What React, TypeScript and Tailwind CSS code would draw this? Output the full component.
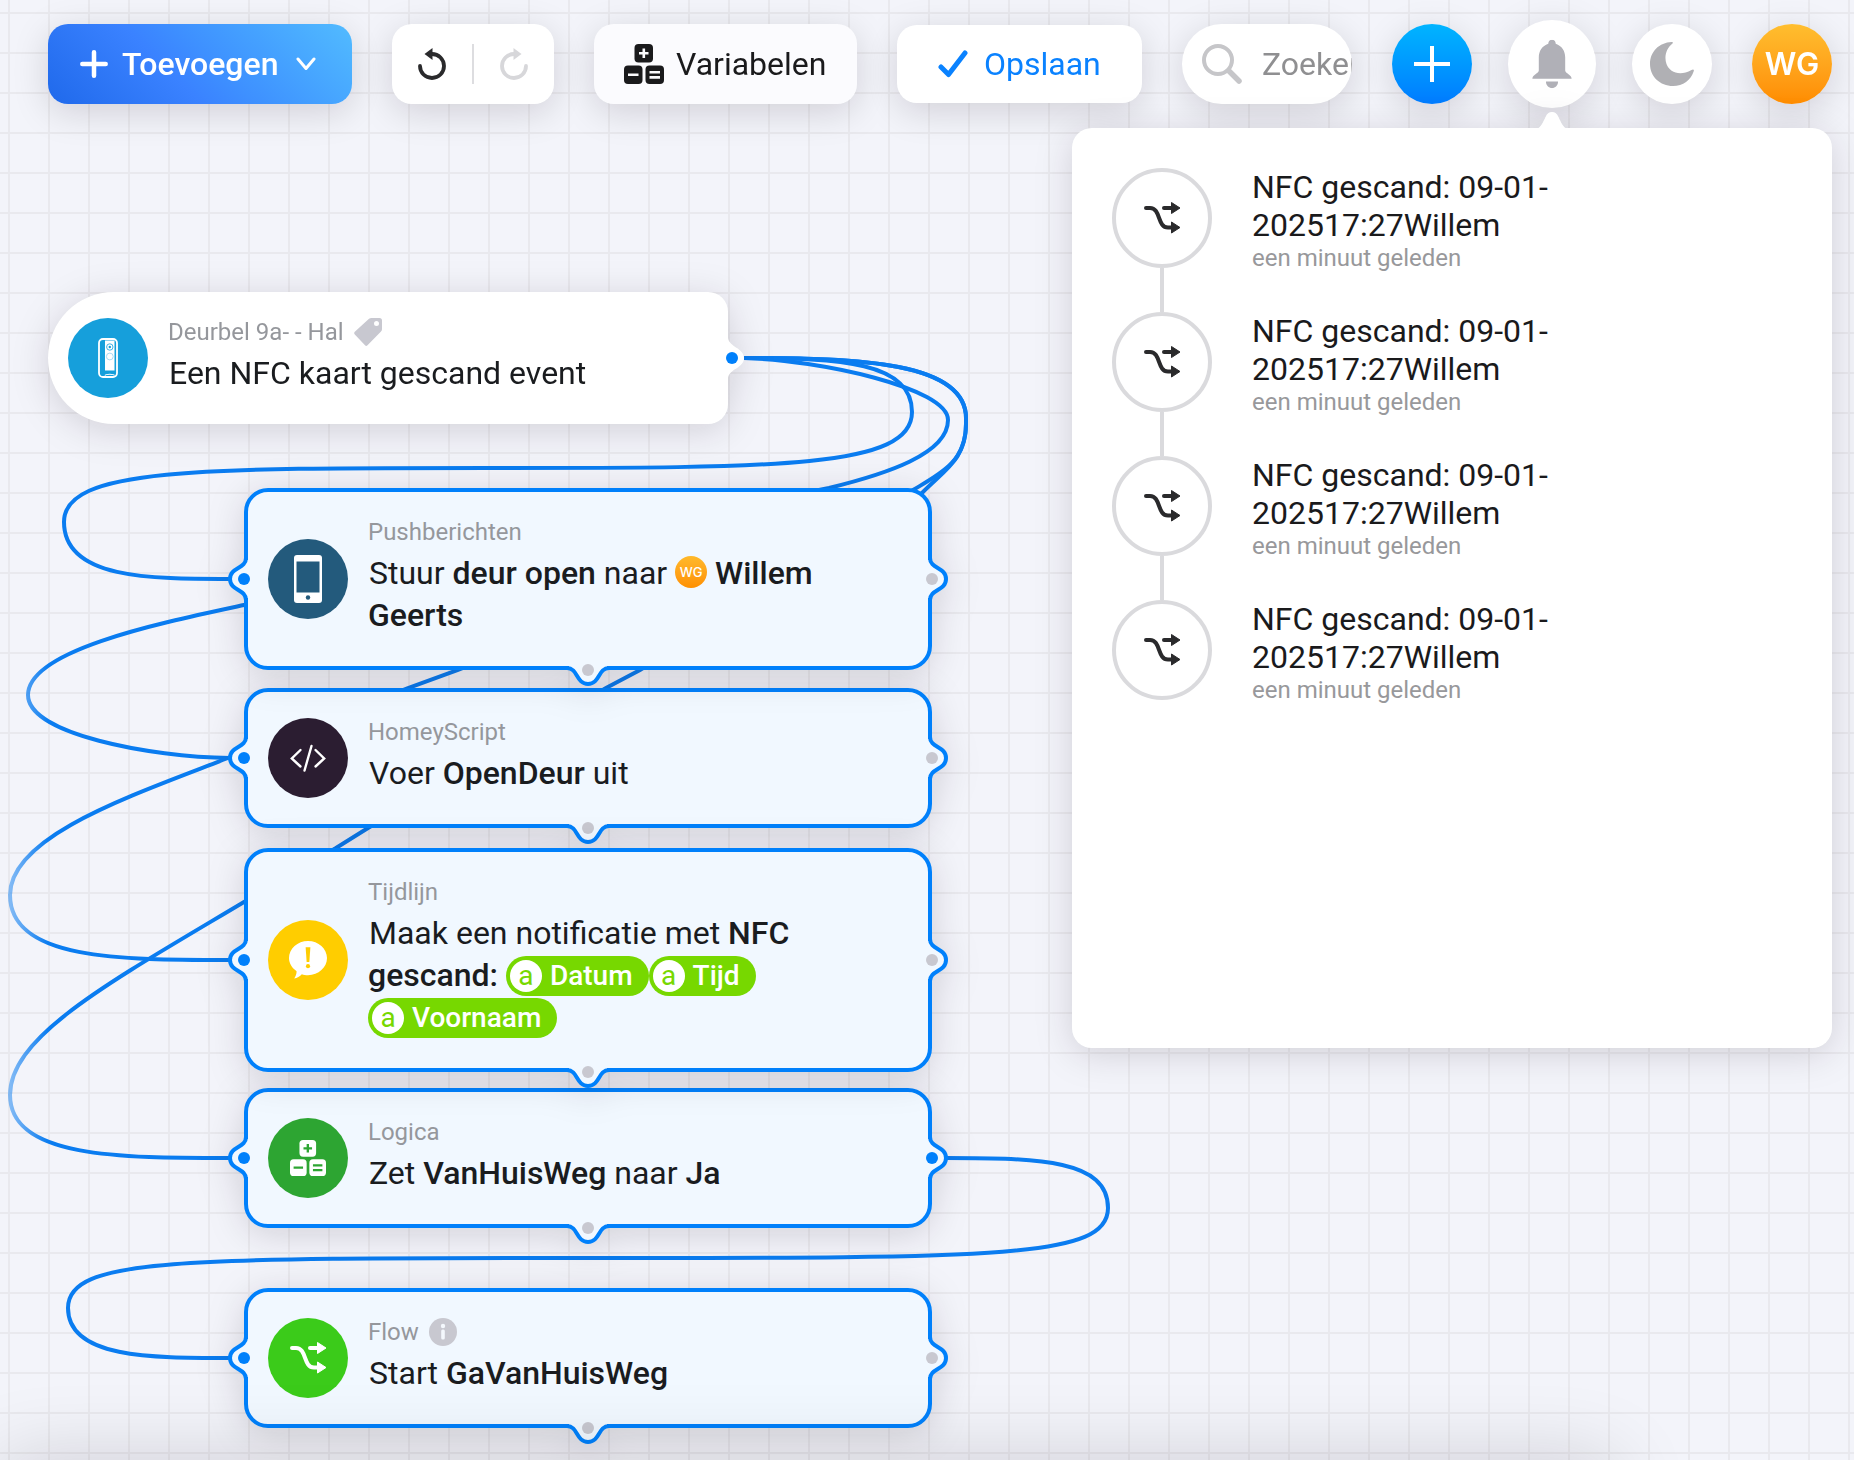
import { useState } from "react";
import type { ReactNode } from "react";

const notifications = [1, 2, 3, 4];

function ShuffleIcon() {
  return (
    <svg width="36" height="32" viewBox="0 0 36 32" fill="none" aria-hidden="true">
      <path d="M2 6H6C17 6 13 25.5 24 25.5H29" stroke="currentColor" strokeWidth="4" strokeLinecap="round" />
      <path d="M20 6H28" stroke="currentColor" strokeWidth="4" strokeLinecap="round" />
      <path d="M27.500 0.500 36 6 27.500 11.500ZM27.500 20 36 25.500 27.500 31Z" fill="currentColor" stroke="currentColor" strokeWidth="1" strokeLinejoin="round" />
    </svg>
  );
}

function LogicIcon({ size, hole }: { size: number; hole: string }) {
  return (
    <svg width={size} height={size} viewBox="0 0 40 40" aria-hidden="true">
      <g fill="currentColor">
        <rect x="10.500" y="0" width="18.500" height="18.500" rx="4" />
        <rect x="0" y="21.500" width="18.500" height="18.500" rx="4" />
        <rect x="21.500" y="21.500" width="18.500" height="18.500" rx="4" />
      </g>
      <path d="M15 9.300H24.500M19.800 4.500V14M4 30.700H14.500M25.500 28.200H36M25.500 33.400H36" stroke={hole} strokeWidth="2.600" />
    </svg>
  );
}

function PhoneIcon() {
  return (
    <svg width="28" height="48" viewBox="0 0 28 48" aria-hidden="true">
      <rect width="28" height="48" rx="3" fill="#fff" />
      <rect x="2.500" y="6.500" width="23" height="31" fill="#235a7c" />
      <circle cx="14" cy="42.500" r="2.200" fill="#235a7c" />
    </svg>
  );
}

function DoorbellIcon() {
  return (
    <svg width="20" height="40" viewBox="0 0 20 40" fill="none" aria-hidden="true">
      <rect x="1" y="1" width="18" height="38" rx="4" stroke="#fff" strokeWidth="1.800" />
      <rect x="7" y="2.500" width="9.500" height="30" fill="#fff" />
      <circle cx="11.800" cy="9" r="3.200" stroke="#169fdb" strokeWidth="0.800" />
      <circle cx="11.800" cy="9" r="1.200" fill="#169fdb" />
      <circle cx="11.800" cy="18.500" r="3.400" stroke="#9fd6f0" strokeWidth="0.900" />
      <path d="M7 37.500C7.500 35.800 16 35.800 16.500 37.500" stroke="#fff" strokeWidth="1.200" />
    </svg>
  );
}

function CodeIcon() {
  return (
    <svg width="36" height="28" viewBox="0 0 36 28" fill="none" stroke="#fff" strokeWidth="2.400" strokeLinecap="round" aria-hidden="true">
      <path d="M10.500 6 1.800 14.500 10.500 22.500M25.500 6 34.200 14.500 25.500 22.500M21.500 2 14.500 26.500" />
    </svg>
  );
}

function NoticeIcon() {
  return (
    <svg width="38" height="38" viewBox="0 0 40 40" aria-hidden="true">
      <path d="M20 0C31 0 40 8 40 18S31 36 20 36C17.500 36 15.500 35.600 13.500 35 11.500 37.500 8.500 39 5.500 39.500 7 37 8 34.500 8 31.800 3 28.500 0 23.500 0 18 0 8 9 0 20 0Z" fill="#fff" />
      <path d="M17.500 6.500H22.500L21.400 22H18.600Z" fill="#ffcd00" />
      <circle cx="20" cy="26.500" r="2.200" fill="#ffcd00" />
    </svg>
  );
}

function TagIcon() {
  return (
    <svg width="28" height="28" viewBox="0 0 28 28" aria-hidden="true">
      <path fillRule="evenodd" d="M15 0.800Q16 0 17.500 0H25.500Q28 0 28 2.500V11Q28 12.500 27 13.500L13.500 27.300Q12.200 28.500 11 27.300L0.800 16.500Q-0.500 15 0.800 13.700ZM22.500 3A2.500 2.500 0 1 0 22.500 8 2.500 2.500 0 1 0 22.500 3Z" fill="#c8c8d0" />
    </svg>
  );
}

function InfoIcon() {
  return (
    <svg width="28" height="28" viewBox="0 0 28 28" aria-hidden="true">
      <circle cx="14" cy="14" r="14" fill="#c8c8d0" />
      <circle cx="14" cy="8" r="2.200" fill="#f4f8fd" />
      <rect x="12.200" y="11.500" width="3.600" height="10" rx="1.500" fill="#f4f8fd" />
    </svg>
  );
}

// Connection point, 0,0 is the middle of the card's inner edge
function Port({ side, active, plain }: { side: "left" | "right" | "bottom"; active?: boolean; plain?: boolean }) {
  const place = {
    left: "left-0 top-1/2 -translate-x-1/2 -translate-y-1/2",
    right: "right-0 top-1/2 translate-x-1/2 -translate-y-1/2",
    bottom: "bottom-0 left-1/2 -translate-x-1/2 translate-y-1/2",
  };
  const turn = { left: "rotate(180)", right: "", bottom: "rotate(90)" };

  return (
    <svg className={`absolute ${place[side]}`} width="48" height="48" viewBox="-24 -24 48 48" fill="none" aria-hidden="true">
      <g transform={turn[side]}>
        {plain ? (
          <path d="M-2 -20H0C1 -11 16 -10 16 0C16 10 1 11 0 20H-2Z" fill="#fff" />
        ) : (
          <>
            <path d="M-1 -19H2C3 -10 18 -11 18 0C18 11 3 10 2 19H-1Z" fill="#f1f8ff" />
            <path d="M2 -21C2 -10 18 -12 18 0C18 12 2 10 2 21" stroke="#0080fb" strokeWidth="4" />
          </>
        )}
        <circle cx="4" cy="0" r="6" fill={active ? "#0080fb" : "#c8c8d0"} />
      </g>
    </svg>
  );
}

function Token({ children }: { children: ReactNode }) {
  return (
    <span className="inline-flex h-10 items-center gap-2 rounded-full bg-[#77d800] pr-4 pl-1 indent-0 align-bottom text-[28px] leading-10 font-medium text-white">
      <span className="flex size-8 items-center justify-center rounded-full bg-white leading-7 font-normal text-[#77d800]">a</span>
      {children}
    </span>
  );
}

type CardProps = {
  place: string;
  color: string;
  icon: ReactNode;
  app: string;
  badge?: ReactNode;
  out?: boolean;
  children: ReactNode;
};

function CardBody({ color, icon, app, badge, children }: Omit<CardProps, "place" | "out">) {
  return (
    <>
      <span className={`flex size-20 shrink-0 items-center justify-center rounded-full text-white ${color}`}>{icon}</span>
      <div className="min-w-0 pb-[6px]">
        <p className="mb-1 flex h-8 items-center gap-[10px] text-2xl leading-8 text-[#95979c]">
          {app}
          {badge}
        </p>
        <h2 className="indent-px text-[32px] leading-[42px] text-[#1a1c1f]">{children}</h2>
      </div>
    </>
  );
}

function ActionCard({ place, out, ...body }: CardProps) {
  return (
    <article
      className={`absolute flex w-[688px] items-center gap-5 rounded-3xl border-4 border-[#0080fb] bg-[#f1f8ff] py-6 pr-10 pl-5 drop-shadow-[0_6px_18px_rgba(20,10,20,0.15)] ${place}`}
    >
      <CardBody {...body} />
      <Port side="left" active />
      <Port side="right" active={out} />
      <Port side="bottom" />
    </article>
  );
}

const wires = [
  "M744 358C840 358 912 362 912 412C912 468 780 468 488 468C196 468 64 468 64 522C64 579 150 579 230 579",
  "M744 358C820 360 948 388 948 420C948 454 886 474 829 488L244 605C160 623 28 650 28 695C28 734 150 757 230 758",
  "M744 358C860 358 966 362 966 418V424C966 462 940 474 913 490L458 670L408 688L228 758C130 796 10 836 10 895C10 960 120 960 230 960",
  "M744 358C860 358 966 362 966 418V424C966 460 944 470 921 494L640 670L606 688L368 828L336 848L244 902C110 982 10 1036 10 1095C10 1158 120 1158 230 1158",
  "M946 1158C1040 1158 1108 1160 1108 1208C1108 1258 1000 1258 588 1258C176 1258 68 1258 68 1308C68 1358 150 1358 230 1358",
];

function Canvas() {
  return (
    <main className="relative col-start-1 row-start-1 h-[1460px] min-h-screen overflow-hidden bg-[#f3f4fa] bg-[linear-gradient(to_right,#e9e9ee_2px,transparent_2px),linear-gradient(to_bottom,#e9e9ee_2px,transparent_2px)] bg-size-[40px_40px] bg-position-[8px_12px]">
      <svg className="absolute inset-0 size-full" fill="none" aria-hidden="true">
        <defs>
          <linearGradient id="wire" gradientUnits="userSpaceOnUse" x1="0" y1="0" x2="48" y2="0">
            <stop offset="0" stopColor="#0a7cf0" stopOpacity="0.35" />
            <stop offset="1" stopColor="#0a7cf0" />
          </linearGradient>
        </defs>
        {wires.map((d) => (
          <path key={d} d={d} stroke="url(#wire)" strokeWidth="4" />
        ))}
      </svg>

      <article className="absolute top-[292px] left-12 flex w-[680px] items-center gap-5 rounded-l-[66px] rounded-r-[20px] bg-white py-6 pr-10 pl-5 drop-shadow-[0_6px_18px_rgba(20,10,20,0.15)]">
        <CardBody color="bg-[#169fdb]" icon={<DoorbellIcon />} app="Deurbel 9a- - Hal" badge={<TagIcon />}>
          Een NFC kaart gescand event
        </CardBody>
        <Port side="right" active plain />
      </article>

      <ActionCard place="left-[244px] top-[488px] z-20" color="bg-[#235a7c]" icon={<PhoneIcon />} app="Pushberichten">
        Stuur <b className="font-medium">deur open</b> naar{" "}
        <span className="mb-[6px] inline-flex size-8 items-center justify-center rounded-full bg-linear-to-b from-[#ffb92a] to-[#ff9000] indent-0 align-bottom font-['Inter',sans-serif] text-[13px] leading-8 font-medium text-white">
          WG
        </span>{" "}
        <b className="font-medium">Willem Geerts</b>
      </ActionCard>

      <ActionCard place="left-[244px] top-[688px] z-10" color="bg-[#2b1d31]" icon={<CodeIcon />} app="HomeyScript">
        Voer <b className="font-medium">OpenDeur</b> uit
      </ActionCard>

      <ActionCard place="left-[244px] top-[848px] z-20" color="bg-[#ffcd00]" icon={<NoticeIcon />} app="Tijdlijn">
        Maak een notificatie met <b className="font-medium">NFC gescand:</b> <Token>Datum</Token>
        <Token>Tijd</Token> <Token>Voornaam</Token>
      </ActionCard>

      <ActionCard
        place="left-[244px] top-[1088px] z-10"
        color="bg-[#2da532]"
        icon={<LogicIcon size={36} hole="#2da532" />}
        app="Logica"
        out
      >
        Zet <b className="font-medium">VanHuisWeg</b> naar <b className="font-medium">Ja</b>
      </ActionCard>

      <ActionCard place="left-[244px] top-[1288px] z-10" color="bg-[#3bcb1a]" icon={<ShuffleIcon />} app="Flow" badge={<InfoIcon />}>
        Start <b className="font-medium">GaVanHuisWeg</b>
      </ActionCard>

      {/* shade of the bottom bar */}
      <div className="pointer-events-none absolute top-full right-[240px] left-0 z-30 h-20 shadow-[0_0_80px_rgba(20,10,20,0.16)]" />
    </main>
  );
}

function Toolbar({ open, onToggle }: { open: boolean; onToggle: () => void }) {
  const shadow = "shadow-[0_8px_36px_rgba(20,10,20,0.15)]";

  return (
    <header className="pointer-events-auto flex h-32 items-center gap-10 pr-[22px] pl-12 text-[32px]">
      <button className={`flex h-20 w-[304px] shrink-0 items-center rounded-[20px] bg-linear-45 from-[#1f69eb] via-[#3a82ff] via-40% to-[#52bbff] pl-8 font-medium text-white ${shadow}`}>
        <svg width="28" height="28" viewBox="0 0 28 28" stroke="currentColor" strokeWidth="4.500" strokeLinecap="round" aria-hidden="true">
          <path d="M14 2.300V25.700M2.300 14H25.700" />
        </svg>
        <span className="ml-[14px]">Toevoegen</span>
        <svg className="ml-[18px]" width="20" height="14" viewBox="0 0 20 14" fill="none" stroke="currentColor" strokeWidth="3" strokeLinecap="round" strokeLinejoin="round" aria-hidden="true">
          <path d="M2 2 10 11.500 18 2" />
        </svg>
      </button>

      <div className={`flex h-20 w-[162px] shrink-0 items-center justify-between rounded-[20px] bg-white px-[26px] ${shadow}`}>
        <button aria-label="Ongedaan maken" className="text-[#2a2a2c]">
          <svg width="28" height="32" viewBox="0 0 28 32" fill="none" aria-hidden="true">
            <path d="M2 18A12 12 0 1 0 14 6" stroke="currentColor" strokeWidth="3.800" strokeLinecap="round" />
            <path d="M6.500 6 14.500 0V12Z" fill="currentColor" />
          </svg>
        </button>
        <span className="h-10 w-[2px] bg-[#dddde0]" />
        <button aria-label="Opnieuw" className="text-[#d7d7da]">
          <svg width="28" height="32" viewBox="0 0 28 32" fill="none" aria-hidden="true">
            <path d="M26 18A12 12 0 1 1 14 6" stroke="currentColor" strokeWidth="3.800" strokeLinecap="round" />
            <path d="M21.500 6 13.500 0V12Z" fill="currentColor" />
          </svg>
        </button>
      </div>

      <button className={`flex h-20 w-[263px] shrink-0 items-center gap-3 rounded-[20px] bg-[#fbfbfe] pl-[30px] text-[#1a1a1c] ${shadow}`}>
        <LogicIcon size={40} hole="#fbfbfe" />
        Variabelen
      </button>

      <button className={`flex h-[78px] w-[245px] shrink-0 items-center gap-4 rounded-[20px] bg-white pl-[41px] text-[#0a82ff] ${shadow}`}>
        <svg width="30" height="28" viewBox="0 0 30 28" fill="none" stroke="currentColor" strokeWidth="5" strokeLinecap="round" strokeLinejoin="round" aria-hidden="true">
          <path d="M3 17 10.500 24.500 27 3" />
        </svg>
        Opslaan
      </button>

      <label className={`flex h-20 min-w-0 flex-1 items-center gap-5 overflow-hidden rounded-full bg-white pl-5 ${shadow}`}>
        <svg className="shrink-0" width="40" height="40" viewBox="0 0 40 40" fill="none" stroke="#c6c6c9" strokeLinecap="round" aria-hidden="true">
          <circle cx="16" cy="16" r="14" strokeWidth="4" />
          <path d="M27 27 37 37" strokeWidth="5.500" />
        </svg>
        <input type="text" aria-label="Zoeken" placeholder="Zoeken" className="w-full min-w-0 outline-none placeholder:text-[#8f8f91]" />
      </label>

      <button aria-label="Nieuw" className={`flex size-20 shrink-0 items-center justify-center rounded-full bg-linear-to-b from-[#00b4ff] to-[#007bff] ${shadow}`}>
        <svg width="36" height="36" viewBox="0 0 36 36" stroke="#fff" strokeWidth="4" aria-hidden="true">
          <path d="M18 0V36M0 18H36" />
        </svg>
      </button>

      <button aria-label="Meldingen" aria-expanded={open} onClick={onToggle} className={`flex size-20 shrink-0 scale-110 items-center justify-center rounded-full bg-white ${shadow}`}>
        <svg width="36" height="44" viewBox="0 0 36 44" fill="#b0b0b7" aria-hidden="true">
          <path d="M18 0C20 0 21.300 1.500 21.400 3.500C27 5.500 30 10 30 16V28C30 30.500 36 32 36 35.500H0C0 32 6 30.500 6 28V16C6 10 9 5.500 14.600 3.500C14.700 1.500 16 0 18 0Z" />
          <path d="M12.500 38H23.500C23.500 41.500 21 44 18 44S12.500 41.500 12.500 38Z" />
        </svg>
      </button>

      <button aria-label="Donkere modus" className={`flex size-20 shrink-0 items-center justify-center rounded-full bg-white ${shadow}`}>
        <svg width="44" height="44" viewBox="0 0 44 44" fill="#b0b0b4" aria-hidden="true">
          <path d="M21.500 0C23 0 23.300 0.800 22.500 1.500C16 6.500 14 15 16.500 22C19.500 30.500 30 34.500 41.500 28C43 27 44.300 27.500 43.800 29C41 38 33 44 23 44C10 44 0 34.500 0 22C0 9.500 9.500 0.500 21.500 0Z" />
        </svg>
      </button>

      <button aria-label="Account" className={`flex size-20 shrink-0 items-center justify-center rounded-full bg-linear-to-b from-[#ffbe2e] to-[#ff8c00] font-['Inter',sans-serif] text-[31px] font-semibold text-white ${shadow}`}>
        WG
      </button>
    </header>
  );
}

function NotificationPanel() {
  return (
    <section
      aria-label="Meldingen"
      className="pointer-events-auto relative mr-[22px] h-[920px] w-[760px] max-w-full self-end rounded-[20px] bg-white px-10 pt-10 drop-shadow-[0_6px_18px_rgba(20,10,20,0.15)]"
    >
      <svg className="absolute -top-4 right-[264px]" width="32" height="17" viewBox="0 0 32 17" fill="#fff" aria-hidden="true">
        <path d="M0 17C5 16 7 10 9.500 5C11 1.500 13 0 16 0C19 0 21 1.500 22.500 5C25 10 27 16 32 17Z" />
      </svg>
      <ul>
        {notifications.map((id) => (
          <li key={id} className="group flex gap-10">
            <div className="flex w-[100px] flex-col items-center">
              <span className="flex size-[100px] items-center justify-center rounded-full border-4 border-[#dadadd] text-[#2a2a2c]">
                <ShuffleIcon />
              </span>
              <span className="h-11 w-1 bg-[#dadadd] group-last:hidden" />
            </div>
            <div className="w-[340px]">
              <p className="text-[32px] leading-[38px] text-[#1a1a1c]">NFC gescand: 09-01-202517:27Willem</p>
              <p className="text-2xl leading-7 text-[#98989b]">een minuut geleden</p>
            </div>
          </li>
        ))}
      </ul>
    </section>
  );
}

export default function App() {
  const [open, setOpen] = useState(true);

  return (
    <div className="grid min-h-screen font-['Roboto',sans-serif]">
      <Canvas />
      <div className="pointer-events-none z-40 col-start-1 row-start-1 flex flex-col">
        <Toolbar open={open} onToggle={() => setOpen(!open)} />
        {open && <NotificationPanel />}
      </div>
    </div>
  );
}
